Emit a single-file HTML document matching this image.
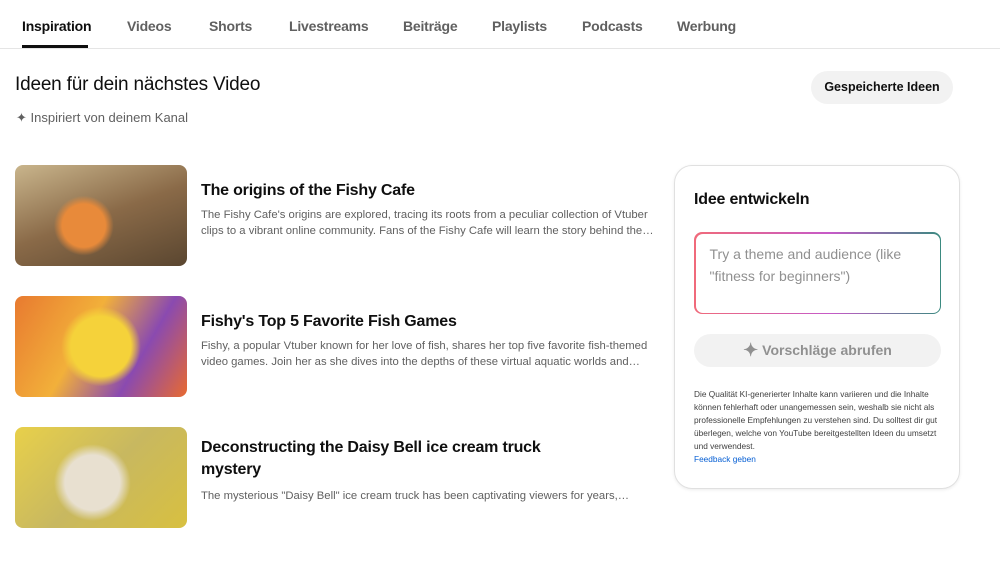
<!DOCTYPE html>
<html><head><meta charset="utf-8"><style>
*{margin:0;padding:0;box-sizing:border-box}
body{width:1000px;height:565px;background:#fff;font-family:"Liberation Sans",sans-serif;color:#0f0f0f;position:relative;overflow:hidden}
.tabs{position:absolute;left:0;top:0;width:1000px;height:49px;border-bottom:1px solid #e5e5e5}
.tab{position:absolute;top:18px;font-size:14px;font-weight:bold;color:#606060;letter-spacing:-0.2px}
.tab.a{color:#0f0f0f}
.ul{position:absolute;left:22px;top:45px;width:66px;height:3px;background:#0f0f0f}
h1{position:absolute;left:15px;top:74px;font-size:19px;font-weight:normal;letter-spacing:-0.2px}
.insp{position:absolute;left:16px;top:110px;font-size:13px;color:#606060}
.btn{position:absolute;left:811px;top:71px;width:142px;height:33px;border-radius:17px;background:#f2f2f2;font-size:12.5px;font-weight:bold;text-align:center;line-height:33px}
.th{position:absolute;left:15px;width:172px;height:101px;border-radius:8px;overflow:hidden}
.t{position:absolute;left:201px;font-size:16px;font-weight:bold;line-height:22px;width:360px;letter-spacing:-0.2px}
.d{position:absolute;left:201px;font-size:11.3px;color:#606060;line-height:16px;width:458px;display:-webkit-box;-webkit-line-clamp:2;-webkit-box-orient:vertical;overflow:hidden}
.card{position:absolute;left:674px;top:165px;width:286px;height:324px;border:1px solid #e0e0e0;border-radius:18px;box-shadow:0 1px 3px rgba(0,0,0,.08)}
.card h2{position:absolute;left:19px;top:25px;font-size:16px;font-weight:bold;letter-spacing:-0.2px}
.inp{position:absolute;left:19px;top:66px;width:247px;height:82px;border-radius:8px;padding:1.5px;background:linear-gradient(90deg,#f06a7a,#c65ac8 55%,#3a8a80)}
.inp div{width:100%;height:100%;background:#fff;border-radius:7px;padding:9px 14px;font-size:14px;color:#909090;line-height:22px}
.go{position:absolute;left:19px;top:168px;width:247px;height:33px;border-radius:17px;background:#f2f2f2;color:#909090;font-size:14px;font-weight:bold;text-align:center;line-height:33px}
.fine{position:absolute;left:19px;top:222px;width:252px;font-size:8.3px;line-height:13px;color:#404040}
.fine a{color:#065fd4;text-decoration:none}
</style></head><body>
<div class="tabs">
<span class="tab a" style="left:22px">Inspiration</span>
<span class="tab" style="left:127px">Videos</span>
<span class="tab" style="left:209px">Shorts</span>
<span class="tab" style="left:289px">Livestreams</span>
<span class="tab" style="left:403px">Beiträge</span>
<span class="tab" style="left:492px">Playlists</span>
<span class="tab" style="left:582px">Podcasts</span>
<span class="tab" style="left:677px">Werbung</span>
<div class="ul"></div>
</div>
<h1>Ideen für dein nächstes Video</h1>
<div class="insp">✦ Inspiriert von deinem Kanal</div>
<div class="btn">Gespeicherte Ideen</div>

<div class="th" style="top:165px;background:radial-gradient(circle at 40% 60%,#e88a3a 0 18%,transparent 25%),linear-gradient(160deg,#c9b58c,#8a6a48 50%,#5a4630)"></div>
<div class="t" style="top:180px">The origins of the Fishy Cafe</div>
<div class="d" style="top:207px">The Fishy Cafe's origins are explored, tracing its roots from a peculiar collection of Vtuber clips to a vibrant online community. Fans of the Fishy Cafe will learn the story behind the…</div>

<div class="th" style="top:296px;background:radial-gradient(circle at 50% 50%,#f5d23a 0 30%,transparent 40%),linear-gradient(120deg,#e87a30,#f2b03a 40%,#8a4ab0 70%,#e86a30)"></div>
<div class="t" style="top:311px">Fishy's Top 5 Favorite Fish Games</div>
<div class="d" style="top:338px">Fishy, a popular Vtuber known for her love of fish, shares her top five favorite fish-themed video games. Join her as she dives into the depths of these virtual aquatic worlds and…</div>

<div class="th" style="top:427px;background:radial-gradient(circle at 45% 55%,#e8e0d0 0 25%,transparent 35%),linear-gradient(135deg,#e8d04a,#c8b860 50%,#d8c040)"></div>
<div class="t" style="top:437px">Deconstructing the Daisy Bell ice cream truck mystery</div>
<div class="d" style="top:488px">The mysterious "Daisy Bell" ice cream truck has been captivating viewers for years,…</div>

<div class="card">
<h2>Idee entwickeln</h2>
<div class="inp"><div>Try a theme and audience (like "fitness for beginners")</div></div>
<div class="go"><span style="font-size:18px;vertical-align:-1px">✦</span> Vorschläge abrufen</div>
<div class="fine">Die Qualität KI-generierter Inhalte kann variieren und die Inhalte können fehlerhaft oder unangemessen sein, weshalb sie nicht als professionelle Empfehlungen zu verstehen sind. Du solltest dir gut überlegen, welche von YouTube bereitgestellten Ideen du umsetzt und verwendest.<br><a>Feedback geben</a></div>
</div>
</body></html>
